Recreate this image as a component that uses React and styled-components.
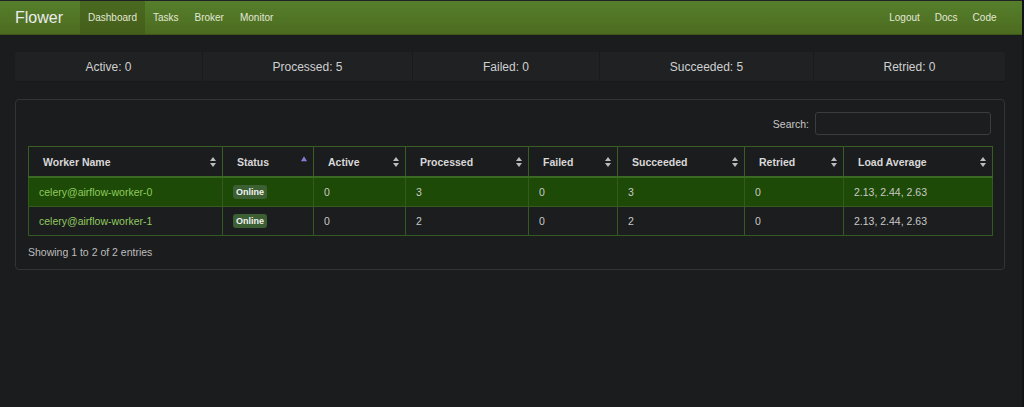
import React from 'react';
import styled, { createGlobalStyle } from 'styled-components';

const GlobalStyle = createGlobalStyle`
  html, body {
    margin: 0;
    padding: 0;
    background: #1b1c1e;
    font-family: "Liberation Sans", Arial, sans-serif;
    color: #cfcfcf;
  }
  #root {
    min-height: 407px;
    border-right: 2px solid #121314;
    box-sizing: border-box;
  }
`;

const NavBar = styled.div`
  display: flex;
  align-items: stretch;
  height: 33px;
  border-top: 1px solid #202226;
  background: linear-gradient(#557f2b, #4d6b20);
  border-bottom: 1px solid #3d5719;
  padding: 0 18px 0 15px;
`;

const Brand = styled.div`
  display: flex;
  align-items: center;
  font-size: 16px;
  color: #ececec;
  margin-right: 17px;
`;

const NavGroup = styled.div`
  display: flex;
  align-items: stretch;
  margin-left: ${(p) => (p.right ? 'auto' : '0')};
`;

const NavItem = styled.div`
  display: flex;
  align-items: center;
  padding: 0 ${(p) => (p.right ? '7.5px' : '8px')};
  font-size: 10px;
  color: #e2e8d6;
  background: ${(p) => (p.active ? 'rgba(60, 80, 20, 0.45)' : 'transparent')};
`;

const Content = styled.div`
  padding: 17px 17px 0 15px;
`;

const StatsBar = styled.div`
  display: flex;
  height: 29px;
  background: #1f2123;
  border-radius: 3px;
  border-bottom: 1px solid #18191b;
`;

const StatCell = styled.div`
  flex: 0 0 ${(p) => p.w}px;
  box-sizing: border-box;
  display: flex;
  align-items: center;
  justify-content: center;
  font-size: 12px;
  color: #d0d0d0;
  border-left: ${(p) => (p.first ? 'none' : '1px solid #191a1c')};
`;

const Panel = styled.div`
  margin-top: 17px;
  width: 990px;
  height: 171px;
  box-sizing: border-box;
  border: 1px solid #323437;
  border-radius: 4px;
  padding: 12px 12px 0 12px;
`;

const SearchRow = styled.div`
  display: flex;
  justify-content: flex-end;
  align-items: center;
  gap: 6px;
  font-size: 10.5px;
  color: #c8c8c8;
  padding-right: 1px;
`;

const SearchInput = styled.div`
  width: 174px;
  height: 21px;
  border: 1px solid #3a3c40;
  border-radius: 3px;
  background: #1c1d1f;
`;

const Table = styled.table`
  margin-top: 11px;
  width: 964px;
  border-collapse: collapse;
  table-layout: fixed;
  font-size: 10.5px;
`;

const Th = styled.th`
  position: relative;
  height: 29px;
  padding: 0 14px;
  text-align: left;
  font-weight: bold;
  color: #d8d8d8;
  background: #1b1c1e;
  border: 1px solid #375f22;
  border-bottom: 2px solid #3b6a25;
`;

const SortIcon = styled.svg`
  position: absolute;
  right: 5px;
  top: 50%;
  transform: translateY(${(p) => (p.single ? '-70%' : '-50%')});
`;

const Tr = styled.tr`
  background: ${(p) => (p.hl ? '#1d4a06' : '#1c1d1f')};
`;

const Td = styled.td`
  height: 28px;
  padding: 0 10px;
  color: ${(p) => (p.link ? '#8fca5e' : '#c9c9c9')};
  border: 1px solid #345a20;
  white-space: nowrap;
`;

const Badge = styled.span`
  display: inline-block;
  padding: 2px 3px;
  border-radius: 3px;
  background: #3c5f34;
  color: #f2f2f2;
  font-size: 9px;
  font-weight: bold;
`;

const Footer = styled.div`
  margin-top: 10px;
  font-size: 10.5px;
  color: #bdbdbd;
`;

const Sort = ({ active }) =>
  active ? (
    <SortIcon single width="8" height="14" viewBox="0 0 8 14">
      <path d="M1 9 L4 4 L7 9 Z" fill="#8080d8" />
    </SortIcon>
  ) : (
    <SortIcon width="8" height="14" viewBox="0 0 8 14">
      <path d="M1 6 L4 2 L7 6 Z" fill="#bdbdbd" />
      <path d="M1 8 L4 12 L7 8 Z" fill="#bdbdbd" />
    </SortIcon>
  );

const columns = [
  { name: 'Worker Name', w: 194 },
  { name: 'Status', w: 91, active: true },
  { name: 'Active', w: 92 },
  { name: 'Processed', w: 123 },
  { name: 'Failed', w: 89 },
  { name: 'Succeeded', w: 127 },
  { name: 'Retried', w: 99 },
  { name: 'Load Average', w: 149 },
];

const workers = [
  { name: 'celery@airflow-worker-0', active: 0, processed: 3, failed: 0, succeeded: 3, retried: 0, load: '2.13, 2.44, 2.63' },
  { name: 'celery@airflow-worker-1', active: 0, processed: 2, failed: 0, succeeded: 2, retried: 0, load: '2.13, 2.44, 2.63' },
];

const stats = [
  { label: 'Active: 0', w: 187 },
  { label: 'Processed: 5', w: 210 },
  { label: 'Failed: 0', w: 187 },
  { label: 'Succeeded: 5', w: 214 },
  { label: 'Retried: 0', w: 192 },
];

const App = () => (
  <>
    <GlobalStyle />
    <NavBar>
      <Brand>Flower</Brand>
      <NavGroup>
        <NavItem active>Dashboard</NavItem>
        <NavItem>Tasks</NavItem>
        <NavItem>Broker</NavItem>
        <NavItem>Monitor</NavItem>
      </NavGroup>
      <NavGroup right>
        <NavItem right>Logout</NavItem>
        <NavItem right>Docs</NavItem>
        <NavItem right>Code</NavItem>
      </NavGroup>
    </NavBar>

    <Content>
      <StatsBar>
        {stats.map((s, i) => (
          <StatCell key={s.label} w={s.w} first={i === 0}>{s.label}</StatCell>
        ))}
      </StatsBar>

      <Panel>
        <SearchRow>
          Search:
          <SearchInput />
        </SearchRow>
        <Table>
          <colgroup>
            {columns.map((c) => (
              <col key={c.name} style={{ width: c.w }} />
            ))}
          </colgroup>
          <thead>
            <tr>
              {columns.map((c) => (
                <Th key={c.name}>
                  {c.name}
                  <Sort active={c.active} />
                </Th>
              ))}
            </tr>
          </thead>
          <tbody>
            {workers.map((w, i) => (
              <Tr key={w.name} hl={i === 0}>
                <Td link>{w.name}</Td>
                <Td><Badge>Online</Badge></Td>
                <Td>{w.active}</Td>
                <Td>{w.processed}</Td>
                <Td>{w.failed}</Td>
                <Td>{w.succeeded}</Td>
                <Td>{w.retried}</Td>
                <Td>{w.load}</Td>
              </Tr>
            ))}
          </tbody>
        </Table>
        <Footer>Showing 1 to 2 of 2 entries</Footer>
      </Panel>
    </Content>
  </>
);

export default App;
